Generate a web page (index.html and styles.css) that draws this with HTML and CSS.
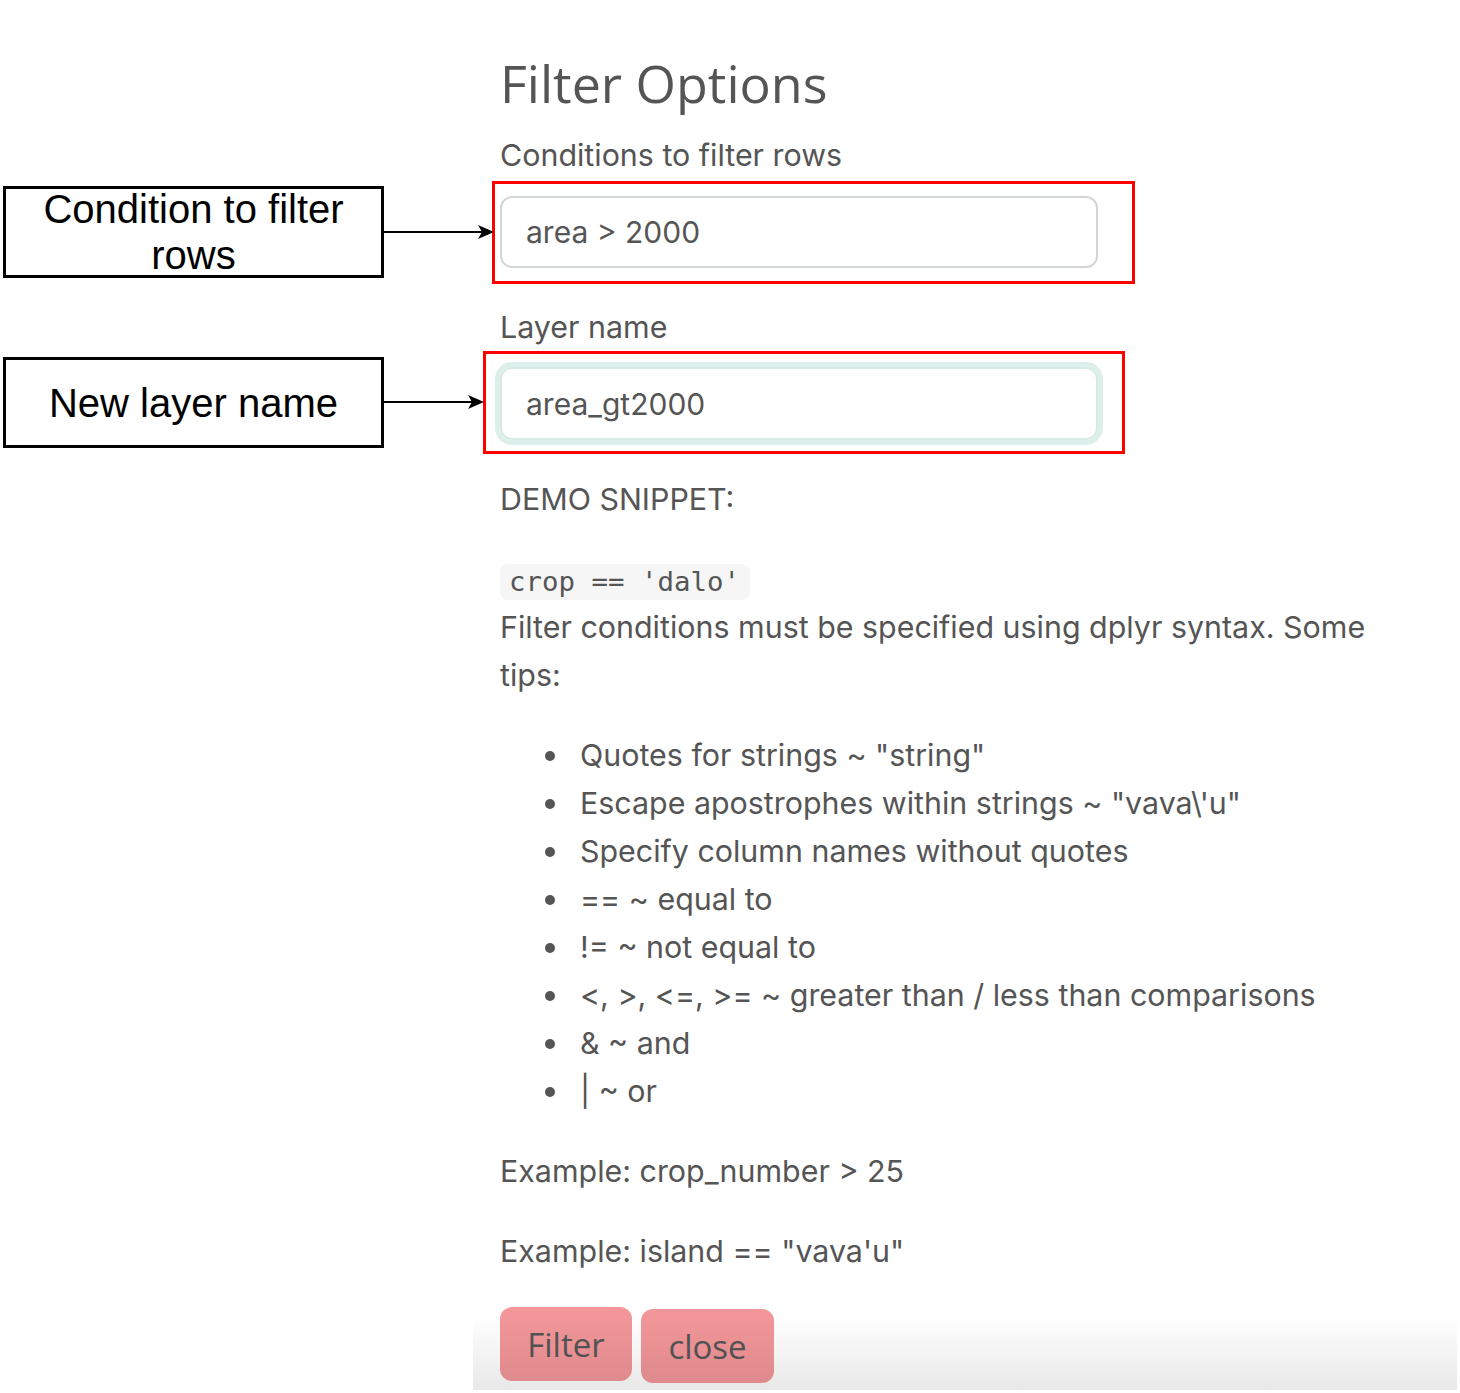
FILE: index.html
```html
<!DOCTYPE html>
<html lang="en">
<head>
<meta charset="utf-8">
<title>Filter Options</title>
<link rel="stylesheet" href="styles.css">
</head>
<body>
<div class="page">
  <div class="panel">
    <h2 class="title">Filter Options</h2>
    <label class="field-label">Conditions to filter rows</label>
    <div class="input">area &gt; 2000</div>
    <label class="field-label label-gap">Layer name</label>
    <div class="input input-focus">area_gt2000</div>
    <p class="para para-first">DEMO SNIPPET:</p>
    <p class="para"><code class="code">crop == 'dalo'</code><br>Filter conditions must be specified using dplyr syntax. Some tips:</p>
    <ul class="tips">
      <li>Quotes for strings ~ "string"</li>
      <li>Escape apostrophes within strings ~ "vava\'u"</li>
      <li>Specify column names without quotes</li>
      <li>== ~ equal to</li>
      <li>!= ~ not equal to</li>
      <li>&lt;, &gt;, &lt;=, &gt;= ~ greater than / less than comparisons</li>
      <li>&amp; ~ and</li>
      <li>| ~ or</li>
    </ul>
    <p class="para">Example: crop_number &gt; 25</p>
    <p class="para">Example: island == "vava'u"</p>
    <div class="buttons">
      <button class="btn">Filter</button>
      <button class="btn btn-close">close</button>
    </div>
  </div>

  <div class="note note-1">Condition to filter<br>rows</div>
  <div class="note note-2">New layer name</div>
  <div class="highlight hl-1"></div>
  <div class="highlight hl-2"></div>
  <svg class="arrows" width="1460" height="1393" viewBox="0 0 1460 1393">
    <line x1="384" y1="232" x2="484" y2="232" stroke="#000" stroke-width="2"/>
    <path d="M494 232 L478 225 L482 232 L478 239 Z" fill="#000"/>
    <line x1="384" y1="402" x2="474" y2="402" stroke="#000" stroke-width="2"/>
    <path d="M484 402 L468 395 L472 402 L468 409 Z" fill="#000"/>
  </svg>
</div>
</body>
</html>
```

FILE: styles.css
```css
* { box-sizing: border-box; }

html, body {
  margin: 0;
  padding: 0;
  background: #fff;
}

.page {
  position: relative;
  width: 1460px;
  height: 1393px;
  overflow: hidden;
}

.panel {
  position: relative;
  margin-left: 473px;
  width: 984px;
  height: 1390px;
  padding: 53px 70px 0 27px;
  font-family: Inter, "Noto Sans", sans-serif;
  font-size: 30.4px;
  color: #555;
}

.panel::after {
  content: "";
  position: absolute;
  left: 0;
  right: 0;
  bottom: 0;
  height: 75px;
  background: linear-gradient(to bottom, rgba(0,0,0,0), rgba(0,0,0,0.09));
  pointer-events: none;
}

.title {
  margin: 0 0 22px;
  font-family: "Open Sans", sans-serif;
  font-weight: 500;
  font-size: 52px;
  line-height: 60px;
  color: #555;
}

.field-label {
  display: block;
  line-height: 40px;
  margin-bottom: 21px;
}

.label-gap { margin-top: 39px; margin-bottom: 20px; }

.input {
  width: 598px;
  height: 72px;
  border: 2px solid #d2d5da;
  border-radius: 12px;
  padding-left: 24px;
  display: flex;
  align-items: center;
  font-size: 30px;
  color: #555;
}

.input-focus {
  height: 73px;
  border-color: #d6ebe4;
  box-shadow: 0 0 0 5px #ddefea;
}

.para {
  margin: 32px 0 0;
  line-height: 48px;
}

.para-first { margin-top: 35px; }

.code {
  display: inline-block;
  font-family: "DejaVu Sans Mono", monospace;
  font-size: 27.4px;
  line-height: 36px;
  padding: 0 10px 0 9px;
  background: #f6f6f6;
  border-radius: 8px;
  color: #555;
  vertical-align: middle;
}

.tips {
  margin: 32px 0 0;
  padding-left: 80px;
  line-height: 48px;
  list-style: none;
}

.tips li::before {
  content: "";
  display: inline-block;
  width: 10px;
  height: 10px;
  border-radius: 50%;
  background: #555;
  margin-left: -35px;
  margin-right: 25px;
  vertical-align: middle;
  position: relative;
  top: -2px;
}

.buttons {
  display: flex;
  gap: 9px;
  margin-top: 32px;
  align-items: flex-start;
}

.btn {
  width: 132px;
  height: 74px;
  border: none;
  border-radius: 12px;
  background: #f29699;
  color: #555;
  font-family: "Open Sans", sans-serif;
  font-size: 33px;
  padding: 0;
}

.btn-close { width: 133px; margin-top: 2px; }

.note {
  position: absolute;
  left: 3px;
  width: 381px;
  border: 3px solid #000;
  font-family: "Liberation Sans", Arial, sans-serif;
  font-size: 40px;
  line-height: 46px;
  color: #000;
  text-align: center;
  display: flex;
  align-items: center;
  justify-content: center;
}

.note-1 { top: 186px; height: 92px; }
.note-2 { top: 357px; height: 91px; }

.highlight {
  position: absolute;
  border: 3px solid #f00;
}

.hl-1 { left: 492px; top: 181px; width: 643px; height: 103px; }
.hl-2 { left: 483px; top: 351px; width: 642px; height: 103px; }

.arrows {
  position: absolute;
  left: 0;
  top: 0;
  pointer-events: none;
}
```
